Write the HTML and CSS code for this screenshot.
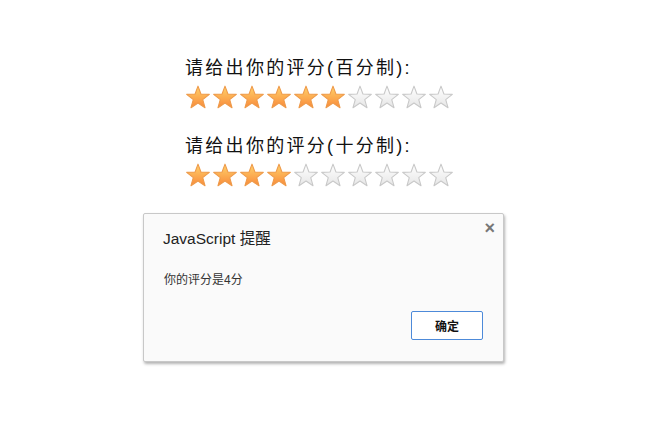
FILE: index.html
```html
<!DOCTYPE html>
<html lang="zh-CN">
  <head>
    <meta charset="UTF-8" />
    <title>评分</title>
    <link rel="stylesheet" href="styles.css">
  </head>
  <body>
    <svg width="0" height="0" class="defs">
      <defs>
        <linearGradient id="on" x1="0" y1="0" x2="0" y2="1">
          <stop offset="0" stop-color="#ffd36b" />
          <stop offset="1" stop-color="#f98a3a" />
        </linearGradient>
        <linearGradient id="off" x1="0" y1="0" x2="0" y2="1">
          <stop offset="0" stop-color="#ffffff" />
          <stop offset="1" stop-color="#e6e6e6" />
        </linearGradient>
        <path id="star" d="M12 2 L14.7 9.28 L22.46 9.6 L16.37 14.42 L18.47 21.9 L12 17.6 L5.53 21.9 L7.63 14.42 L1.54 9.6 L9.3 9.28 Z" />
      </defs>
    </svg>

    <div id="wrap">
      <div class="row">
        <p class="title">请给出你的评分(百分制):</p>
        <ul class="stars">
          <li class="on"><svg viewBox="0 0 24 24"><use href="#star" /></svg></li>
          <li class="on"><svg viewBox="0 0 24 24"><use href="#star" /></svg></li>
          <li class="on"><svg viewBox="0 0 24 24"><use href="#star" /></svg></li>
          <li class="on"><svg viewBox="0 0 24 24"><use href="#star" /></svg></li>
          <li class="on"><svg viewBox="0 0 24 24"><use href="#star" /></svg></li>
          <li class="on"><svg viewBox="0 0 24 24"><use href="#star" /></svg></li>
          <li><svg viewBox="0 0 24 24"><use href="#star" /></svg></li>
          <li><svg viewBox="0 0 24 24"><use href="#star" /></svg></li>
          <li><svg viewBox="0 0 24 24"><use href="#star" /></svg></li>
          <li><svg viewBox="0 0 24 24"><use href="#star" /></svg></li>
        </ul>
      </div>
      <div class="row">
        <p class="title">请给出你的评分(十分制):</p>
        <ul class="stars">
          <li class="on"><svg viewBox="0 0 24 24"><use href="#star" /></svg></li>
          <li class="on"><svg viewBox="0 0 24 24"><use href="#star" /></svg></li>
          <li class="on"><svg viewBox="0 0 24 24"><use href="#star" /></svg></li>
          <li class="on"><svg viewBox="0 0 24 24"><use href="#star" /></svg></li>
          <li><svg viewBox="0 0 24 24"><use href="#star" /></svg></li>
          <li><svg viewBox="0 0 24 24"><use href="#star" /></svg></li>
          <li><svg viewBox="0 0 24 24"><use href="#star" /></svg></li>
          <li><svg viewBox="0 0 24 24"><use href="#star" /></svg></li>
          <li><svg viewBox="0 0 24 24"><use href="#star" /></svg></li>
          <li><svg viewBox="0 0 24 24"><use href="#star" /></svg></li>
        </ul>
      </div>
    </div>

    <!-- alert 弹窗 -->
    <div class="alert">
      <span class="close">&times;</span>
      <p class="alert_title">JavaScript 提醒</p>
      <p class="alert_msg">你的评分是4分</p>
      <div class="alert_foot">
        <button type="button" class="button_ok">确定</button>
      </div>
    </div>
  </body>
</html>
```

FILE: styles.css
```css
* {
  margin: 0;
  padding: 0;
}

body {
  font-family: "Liberation Sans", "Noto Sans CJK SC", sans-serif;
  color: #222;
  background: #fff;
}

ul,
li {
  list-style: none;
}

.defs {
  position: absolute;
}

#wrap {
  padding: 56px 0 0 185px;
}

.row {
  margin-bottom: 24px;
}

.row .title {
  font-size: 18px;
  line-height: 24px;
  height: 24px;
  letter-spacing: 2.3px;
  color: #111;
}

.stars {
  display: flex;
  gap: 1px;
  margin-top: 4px;
}

.stars li {
  width: 26px;
  height: 26px;
}

.stars svg {
  display: block;
  width: 26px;
  height: 26px;
}

.stars li use {
  fill: url(#off);
  stroke: #c8c8c8;
  stroke-width: 1;
  stroke-linejoin: round;
}

.stars li.on use {
  fill: url(#on);
  stroke: #ee9a4a;
}

.alert {
  position: absolute;
  left: 143px;
  top: 213px;
  width: 359px;
  height: 147px;
  background: #fafafa;
  border: 1px solid #c8c8c8;
  border-radius: 2px;
  box-shadow: 1px 2px 3px rgba(0, 0, 0, 0.3);
}

.close {
  position: absolute;
  right: 8px;
  top: 4px;
  font-size: 18px;
  font-weight: bold;
  color: #777;
}

.alert_title {
  margin: 15px 0 0 19px;
  font-size: 15.5px;
  line-height: 20px;
  color: #222;
}

.alert_msg {
  margin: 23px 0 0 20px;
  font-size: 12px;
  line-height: 16px;
  color: #333;
}

.alert_foot {
  display: flex;
  justify-content: flex-end;
  padding: 23px 20px 0 0;
}

.button_ok {
  width: 72px;
  height: 29px;
  background: #fff;
  border: 1px solid #4d8ad9;
  border-radius: 2px;
  font-family: "Noto Sans CJK SC", sans-serif;
  font-size: 12px;
  font-weight: bold;
  color: #111;
}
```
